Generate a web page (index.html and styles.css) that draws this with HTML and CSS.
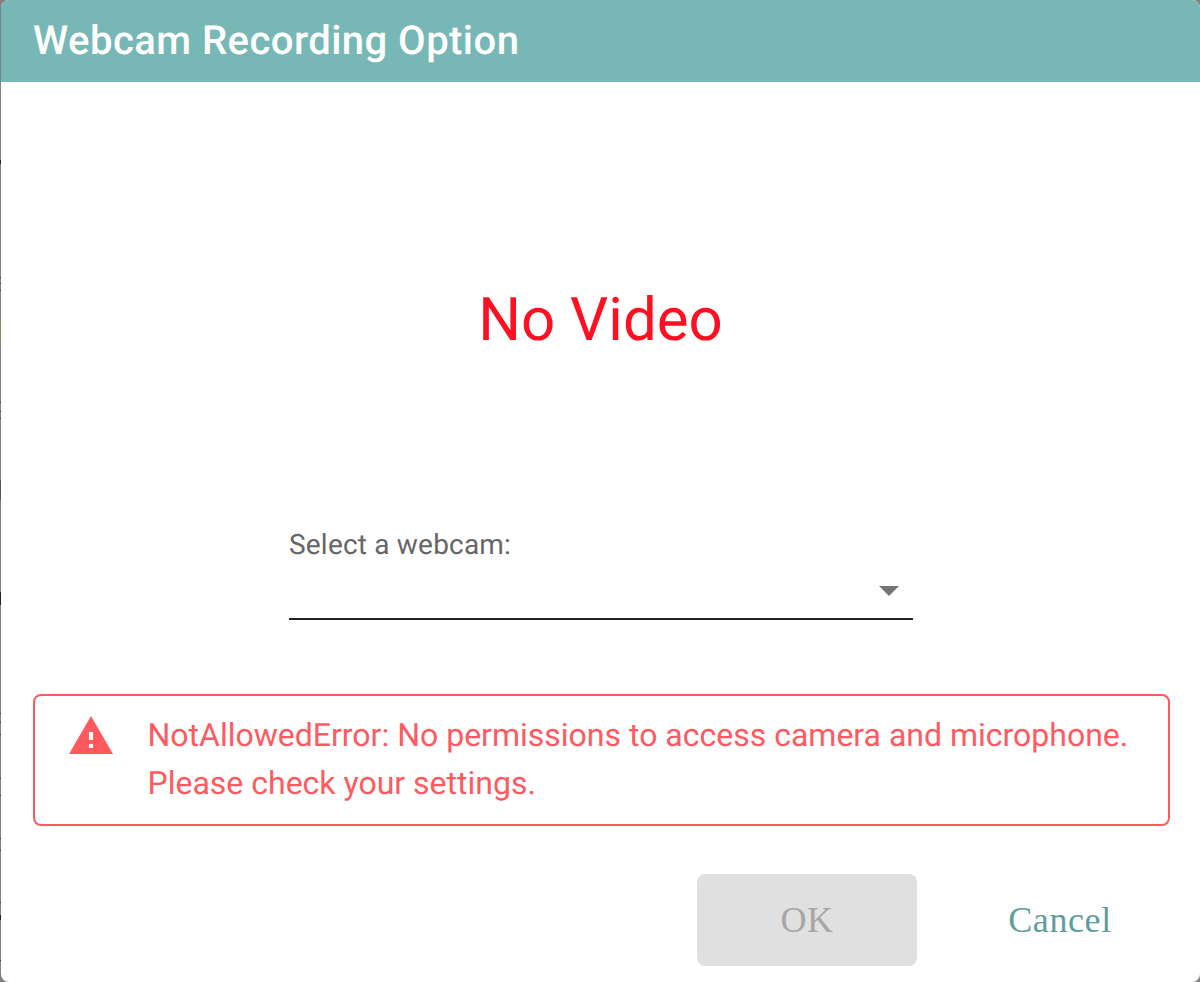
FILE: index.html
```html
<!DOCTYPE html>
<html lang="en">
<head>
<meta charset="utf-8">
<title>Webcam Recording Option</title>
<link rel="stylesheet" href="styles.css">
</head>
<body>
<div class="dialog">
  <header class="head"><h1 class="title">Webcam Recording Option</h1></header>
  <div class="preview"><span class="novideo">No Video</span></div>
  <div class="field">
    <label class="label">Select a webcam:</label>
    <div class="select"><span class="arrow"></span></div>
  </div>
  <div class="alert">
    <svg class="warn" viewBox="0 0 24 24" width="48" height="48"><path fill="#ff5a5f" d="M1 21h22L12 2 1 21zm12-3h-2v-2h2v2zm0-4h-2v-4h2v4z"/></svg>
    <p class="msg">NotAllowedError: No permissions to access camera and microphone. Please check your settings.</p>
  </div>
  <div class="actions">
    <button class="btn ok" disabled>OK</button>
    <button class="btn cancel">Cancel</button>
  </div>
</div>
</body>
</html>
```
FILE: styles.css
```css
* { box-sizing: border-box; }
html, body { margin: 0; height: 982px; overflow: hidden; }
body {
  background-color: #808080;
  background-repeat: no-repeat;
  background-image: linear-gradient(to bottom,
    #808080 160px, #222 160px, #222 164px, #808080 164px,
    #808080 277px, #333 277px, #333 278px, #808080 278px,
    #808080 283px, #333 283px, #333 284px, #808080 284px,
    #808080 290px, #333 290px, #333 291px, #808080 291px,
    #808080 320px, #8f8f55 320px, #8f8f55 345px, #808080 345px,
    #808080 402px, #333 402px, #333 403px, #808080 403px,
    #808080 411px, #333 411px, #333 412px, #808080 412px,
    #808080 418px, #333 418px, #333 419px, #808080 419px,
    #808080 480px, #555 480px, #555 500px, #808080 500px,
    #808080 592px, #222 592px, #222 605px, #808080 605px,
    #808080 713px, #333 713px, #333 714px, #808080 714px,
    #808080 722px, #333 722px, #333 723px, #808080 723px,
    #808080 734px, #333 734px, #333 735px, #808080 735px,
    #808080 778px, #333 778px, #333 779px, #808080 779px,
    #808080 795px, #333 795px, #333 796px, #808080 796px,
    #808080 838px, #333 838px, #333 839px, #808080 839px,
    #808080 850px, #333 850px, #333 851px, #808080 851px,
    #808080 902px, #333 902px, #333 903px, #808080 903px,
    #808080 915px, #222 915px, #222 920px, #808080 920px,
    #808080 960px, #333 960px, #333 961px, #808080 961px);
}
.dialog {
  margin-left: 1px;
  height: 982px;
  background: #fff;
  border-radius: 8px;
  overflow: hidden;
  display: flex;
  flex-direction: column;
  font-family: Roboto, sans-serif;
  text-rendering: geometricPrecision;
}
.head { height: 82px; flex: none; background: #77b8b6; padding: 0 32px 2px; display: flex; align-items: center; }
.title { margin: 0; color: #fff; font-size: 40px; font-weight: 500; letter-spacing: 0.46px; }
.preview { height: 446px; flex: none; display: flex; justify-content: center; padding-top: 198px; }
.novideo { font-size: 60px; line-height: 80px; color: #ff0f22; }
.field { width: 624px; margin-left: 288px; flex: none; height: 92px; display: flex; flex-direction: column; }
.label { font-size: 28px; line-height: 32px; color: #666; letter-spacing: 0.2px; margin-top: 1px; }
.select { flex: 1; border-bottom: 2px solid #222; position: relative; }
.arrow { position: absolute; right: 14px; top: 25px; width: 0; height: 0; border-left: 10px solid transparent; border-right: 10px solid transparent; border-top: 10px solid #757575; }
.alert {
  margin: 74px 30px 0 32px;
  height: 132px;
  flex: none;
  border: 2px solid #ff5a5f;
  border-radius: 8px;
  display: flex;
  align-items: flex-start;
  padding: 16px 30px 0 32px;
}
.warn { flex: none; }
.msg { margin: -1px 0 0 32.5px; font-size: 32px; line-height: 48px; color: #ff5a5f; }
.actions { flex: none; display: flex; margin: 48px 0 0 696px; }
.btn { font-family: "Liberation Serif", serif; font-size: 36px; border: 0; height: 92px; width: 220px; border-radius: 8px; padding: 0; letter-spacing: 0.6px; background: transparent; }
.ok { background: #e0e0e0; color: #a6a6a6; }
.cancel { color: #5f9e98; margin-left: 33px; }
```
